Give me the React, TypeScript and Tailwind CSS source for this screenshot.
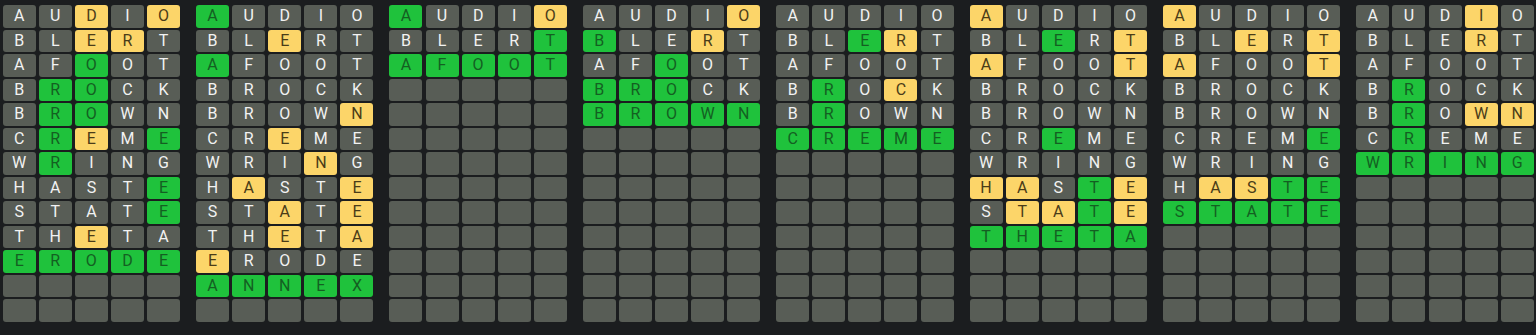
import React from 'react';

type Board = { rows: [string, string][] };

// g = green, y = yellow, . = grey
const boards: Board[] = [
  {
    rows: [
      ['AUDIO', '..y.y'],
      ['BLERT', '..yy.'],
      ['AFOOT', '..g..'],
      ['BROCK', '.gg..'],
      ['BROWN', '.gg..'],
      ['CREME', '.gy.g'],
      ['WRING', '.g...'],
      ['HASTE', '....g'],
      ['STATE', '....g'],
      ['THETA', '..y..'],
      ['ERODE', 'ggggg'],
    ],
  },
  {
    rows: [
      ['AUDIO', 'g....'],
      ['BLERT', '..y..'],
      ['AFOOT', 'g....'],
      ['BROCK', '.....'],
      ['BROWN', '....y'],
      ['CREME', '..y..'],
      ['WRING', '...y.'],
      ['HASTE', '.y..y'],
      ['STATE', '..y.y'],
      ['THETA', '..y.y'],
      ['ERODE', 'y....'],
      ['ANNEX', 'ggggg'],
    ],
  },
  {
    rows: [
      ['AUDIO', 'g...y'],
      ['BLERT', '....g'],
      ['AFOOT', 'ggggg'],
    ],
  },
  {
    rows: [
      ['AUDIO', '....y'],
      ['BLERT', 'g..y.'],
      ['AFOOT', '..g..'],
      ['BROCK', 'ggg..'],
      ['BROWN', 'ggggg'],
    ],
  },
  {
    rows: [
      ['AUDIO', '.....'],
      ['BLERT', '..gy.'],
      ['AFOOT', '.....'],
      ['BROCK', '.g.y.'],
      ['BROWN', '.g...'],
      ['CREME', 'ggggg'],
    ],
  },
  {
    rows: [
      ['AUDIO', 'y....'],
      ['BLERT', '..g.y'],
      ['AFOOT', 'y...y'],
      ['BROCK', '.....'],
      ['BROWN', '.....'],
      ['CREME', '..g..'],
      ['WRING', '.....'],
      ['HASTE', 'yy.gy'],
      ['STATE', '.yygy'],
      ['THETA', 'ggggg'],
    ],
  },
  {
    rows: [
      ['AUDIO', 'y....'],
      ['BLERT', '..y.y'],
      ['AFOOT', 'y...y'],
      ['BROCK', '.....'],
      ['BROWN', '.....'],
      ['CREME', '....g'],
      ['WRING', '.....'],
      ['HASTE', '.yygg'],
      ['STATE', 'ggggg'],
    ],
  },
  {
    rows: [
      ['AUDIO', '...y.'],
      ['BLERT', '...y.'],
      ['AFOOT', '.....'],
      ['BROCK', '.g...'],
      ['BROWN', '.g.yy'],
      ['CREME', '.g...'],
      ['WRING', 'ggggg'],
    ],
  },
];

const TOTAL_ROWS = 13;

const cellClass = (c: string) => {
  if (c === 'g') return 'bg-[#1fc23c] text-[#145f22]';
  if (c === 'y') return 'bg-[#fcd569] text-[#4a3c18]';
  return 'bg-[#585d56] text-[#f2f2f2]';
};

const BoardGrid: React.FC<{ board: Board }> = ({ board }) => {
  const cells: React.ReactNode[] = [];
  for (let r = 0; r < TOTAL_ROWS; r++) {
    const row = board.rows[r];
    for (let c = 0; c < 5; c++) {
      const letter = row ? row[0][c] : '';
      const state = row ? row[1][c] : '.';
      cells.push(
        <div
          key={`${r}-${c}`}
          className={`flex items-center justify-center rounded-[3px] text-[16px] leading-none ${cellClass(state)}`}
        >
          {letter}
        </div>
      );
    }
  }
  return (
    <div className="grid grid-cols-[repeat(5,33px)] auto-rows-[22.5px] gap-x-[3.1px] gap-y-[2px]">
      {cells}
    </div>
  );
};

export default function App() {
  return (
    <div
      className="h-[335px] w-full overflow-hidden bg-[#1b1d1f] pl-[2.7px] pt-[5px]"
      style={{ fontFamily: 'Roboto, "Noto Sans", sans-serif' }}
    >
      <div className="flex gap-[16px]">
        {boards.map((b, i) => (
          <BoardGrid key={i} board={b} />
        ))}
      </div>
    </div>
  );
}
